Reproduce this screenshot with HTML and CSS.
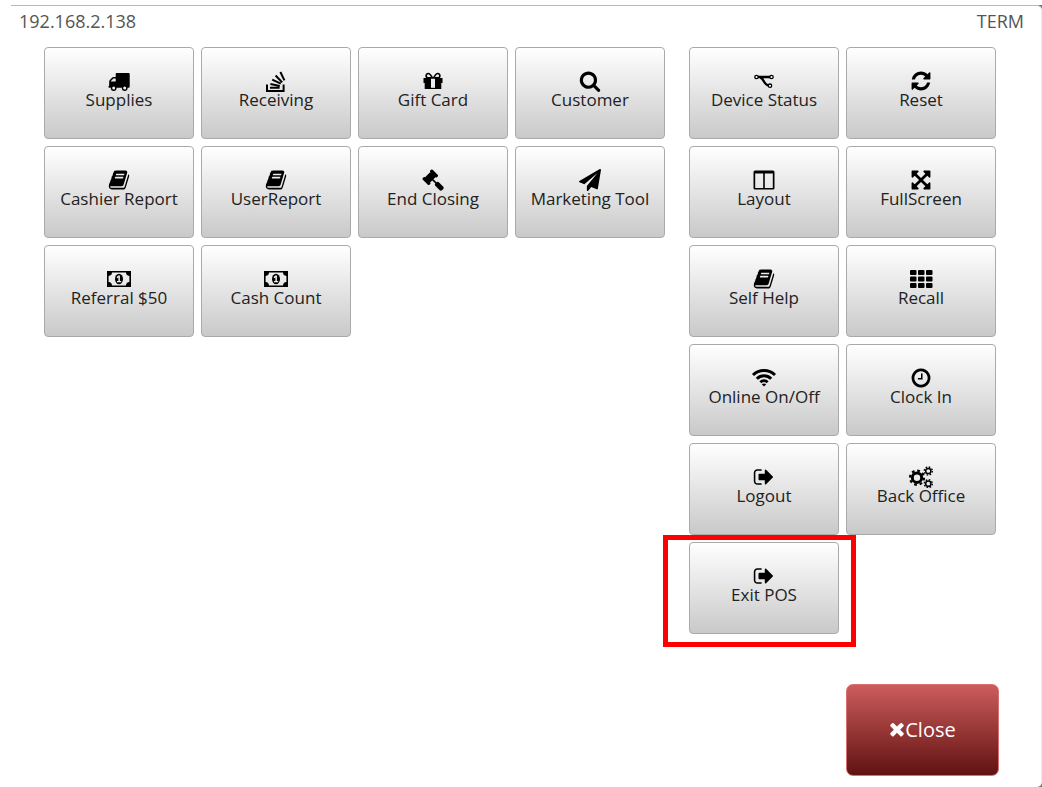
FILE: index.html
```
<!DOCTYPE html>
<html lang="en">
<head>
<meta charset="utf-8">
<title>POS Menu</title>

<link rel="stylesheet" href="styles.css">

</head>

<body>

<!-- shared icons -->
<svg class="defs" aria-hidden="true">
    <symbol id="book" viewBox="-163 0 2118 1792">
        <path d="M1703 478q40 57 18 129l-275 906q-19 64-76.5 107.5t-122.5 43.5h-923q-77 0-148.5-53.5t-99.5-131.5q-24-67-2-127 0-4 3-27t4-37q1-8-3-21.5t-3-19.5q2-11 8-21t16.5-23.5 16.5-23.5q23-38 45-91.5t30-91.5q3-10 .5-30t-.5-28q3-11 17-28t17-23q21-36 42-92t25-90q1-9-2.5-32t.5-28q4-13 22-30.5t22-22.5q19-26 42.5-84.5t27.5-96.5q1-8-3-25.5t-2-26.5q2-8 9-18t18-23 17-21q8-12 16.5-30.5t15-35 16-36 19.5-32 26.5-23.5 36-11.5 47.5 5.5l-1 3q38-9 51-9h761q74 0 114 56t18 130l-274 906q-36 119-71.5 153.5t-128.5 34.5h-869q-27 0-38 15-11 16-1 43 24 70 144 70h923q29 0 56-15.5t35-41.5l300-987q7-22 5-57 38 15 59 43zm-1064 2q-4 13 2 22.5t20 9.5h608q13 0 25.5-9.5t16.5-22.5l21-64q4-13-2-22.5t-20-9.5h-608q-13 0-25.5 9.5t-16.5 22.5zm-83 256q-4 13 2 22.5t20 9.5h608q13 0 25.5-9.5t16.5-22.5l21-64q4-13-2-22.5t-20-9.5h-608q-13 0-25.5 9.5t-16.5 22.5z"/>
    </symbol>
    <symbol id="money" viewBox="0 0 26 22">
        <path fill-rule="evenodd" d="M1 3h24v16H1zM6 4.6a3.6 3.6 0 0 1-3.4 3.4v6a3.6 3.6 0 0 1 3.4 3.4h14a3.6 3.6 0 0 1 3.4-3.4V8A3.6 3.6 0 0 1 20 4.6z"/>
        <ellipse cx="13" cy="11" rx="4" ry="5.2"/>
        <path fill="#eee" d="M12.3 7.5h1.6v5.4h1.3v1.3h-4.2v-1.3h1.4V9.6l-1.1.6-.7-1z"/>
    </symbol>
    <symbol id="signout" viewBox="-163 0 2118 1792">
        <path d="M704 1440q0 4 1 20t.5 26.5-3 23.5-10 19.5-20.5 6.5h-320q-119 0-203.5-84.5t-84.5-203.5v-704q0-119 84.5-203.5t203.5-84.5h320q13 0 22.5 9.5t9.5 22.5q0 4 1 20t.5 26.5-3 23.5-10 19.5-20.5 6.5h-320q-66 0-113 47t-47 113v704q0 66 47 113t113 47h312l11.5 1 11.5 3 8 5.5 7 9 2 13.5zm928-544q0 26-19 45l-544 544q-19 19-45 19t-45-19-19-45v-288h-448q-26 0-45-19t-19-45v-384q0-26 19-45t45-19h448v-288q0-26 19-45t45-19 45 19l544 544q19 19 19 45z"/>
    </symbol>
</svg>

<div class="screen">
<div class="panel">

<header>
    <span>192.168.2.138</span>
    <span>TERM</span>
</header>

<main>
<div class="menu menu-left">
    <button class="tile">
        <svg viewBox="0 0 26 22"><path fill-rule="evenodd" d="M10.5 3h12.2q1 0 1 1v12.5q0 1.2-1.2 1.2H3.6q-1.2 0-1.2-1.2.8-.4.8-1.4V11.5q0-.9.6-1.5L6.2 7.6q.6-.6 1.5-.6h2V4q0-1 .8-1zM4.8 11.5h4.9V8.6h-2q-.3 0-.5.2l-2.2 2.2q-.2.2-.2.5z"/><circle cx="7.7" cy="18" r="2.2" fill="#eee" stroke="#000" stroke-width="1.4"/><circle cx="18.7" cy="18" r="2.2" fill="#eee" stroke="#000" stroke-width="1.4"/></svg>
        <span>Supplies</span>
    </button>
    <button class="tile">
        <svg viewBox="0 0 26 22"><path class="line" stroke-width="2" d="M4 14.5v6.5h16.6v-6.5M7 17.7h9.6M7.4 14l9.4 2M9.2 9.7l8.6 4M12.6 5.5l6.6 6.9M17.4 2l4 8.4"/></svg>
        <span>Receiving</span>
    </button>
    <button class="tile">
        <svg viewBox="0 0 26 22"><path d="M3.5 8h19v5h-1.2v6h-16.6v-6h-1.2z"/><path fill="#eee" d="M11 8.5h4v9.3h-4z"/><path class="line" stroke-width="1.6" d="M12.4 7.8H8.2c-2.8 0-2.8-4.3 0-4.3 1.8 0 3 2 4.2 4.3zM13.6 7.8h4.2c2.8 0 2.8-4.3 0-4.3-1.8 0-3 2-4.2 4.3z"/></svg>
        <span>Gift Card</span>
    </button>
    <button class="tile">
        <svg viewBox="-163 0 2118 1792"><path d="M1216 832q0-185-131.5-316.5t-316.5-131.5-316.5 131.5-131.5 316.5 131.5 316.5 316.5 131.5 316.5-131.5 131.5-316.5zm512 832q0 52-38 90t-90 38q-54 0-90-38l-343-342q-179 124-399 124-143 0-273.5-55.5t-225-150-150-225-55.5-273.5 55.5-273.5 150-225 225-150 273.5-55.5 273.5 55.5 225 150 150 225 55.5 273.5q0 220-124 399l343 343q37 37 37 90z"/></svg>
        <span>Customer</span>
    </button>
    <button class="tile">
        <svg><use href="#book"/></svg>
        <span>Cashier Report</span>
    </button>
    <button class="tile">
        <svg><use href="#book"/></svg>
        <span>UserReport</span>
    </button>
    <button class="tile">
        <svg viewBox="-163 0 2118 1792"><path d="M1771 1536q0 53-37 90l-107 108q-39 37-91 37-53 0-90-37l-363-364q-38-36-38-90 0-53 43-96l-256-256-126 126q-14 14-34 14t-34-14q2 2 12.5 12t12.5 13 10 11.5 10 13.5 6 13.5 5.5 16.5 1.5 18q0 38-28 68-3 3-16.5 18t-19 20.5-18.5 16.5-22 15.5-22 9-26 4.5q-40 0-68-28l-408-408q-28-28-28-68 0-13 4.5-26t9-22 15.5-22 16.5-18.5 20.5-19 18-16.5q30-28 68-28 10 0 18 1.5t16.5 5.5 13.5 6 13.5 10 11.5 10 13 12.5 12 12.5q-14-14-14-34t14-34l348-348q14-14 34-14t34 14q-2-2-12.5-12t-12.5-13-10-11.5-10-13.5-6-13.5-5.5-16.5-1.5-18q0-38 28-68 3-3 16.5-18t19-20.5 18.5-16.5 22-15.5 22-9 26-4.5q40 0 68 28l408 408q28 28 28 68 0 13-4.5 26t-9 22-15.5 22-16.5 18.5-20.5 19-18 16.5q-30 28-68 28-10 0-18-1.5t-16.5-5.5-13.5-6-13.5-10-11.5-10-13-12.5-12-12.5q14 14 14 34t-14 34l-126 126 256 256q43-43 96-43 52 0 91 37l363 363q37 39 37 91z"/></svg>
        <span>End Closing</span>
    </button>
    <button class="tile">
        <svg viewBox="-163 0 2118 1792"><path d="M1764 11q33 24 27 64l-256 1536q-5 29-32 45-14 8-31 8-11 0-24-5l-453-185-242 295q-18 23-49 23-13 0-22-4-19-7-30.5-23.5t-11.5-36.5v-349l864-1059-1069 925-395-162q-37-14-40-55-2-40 32-59l1664-960q15-9 32-9 20 0 36 11z"/></svg>
        <span>Marketing Tool</span>
    </button>
    <button class="tile">
        <svg><use href="#money"/></svg>
        <span>Referral $50</span>
    </button>
    <button class="tile">
        <svg><use href="#money"/></svg>
        <span>Cash Count</span>
    </button>
</div>

<div class="menu menu-right">
    <button class="tile">
        <svg viewBox="0 0 26 22"><path class="line" stroke-width="2.4" d="M7 7h12M9 7.5c4 0 3 7.5 9 8"/><g fill="#fff" stroke="#000" stroke-width="1.3"><circle cx="5.5" cy="7" r="1.7"/><circle cx="20.5" cy="7" r="1.7"/><circle cx="19" cy="15.7" r="1.7"/></g></svg>
        <span>Device Status</span>
    </button>
    <button class="tile">
        <svg viewBox="-163 0 2118 1792"><path d="M1639 1056q0 5-1 7-64 268-268 434.5t-478 166.5q-146 0-282.5-55t-243.5-157l-129 129q-19 19-45 19t-45-19-19-45v-448q0-26 19-45t45-19h448q26 0 45 19t19 45-19 45l-137 137q71 66 161 102t187 36q134 0 250-65t186-179q11-17 53-117 8-23 30-23h192q13 0 22.5 9.5t9.5 22.5zm25-800v448q0 26-19 45t-45 19h-448q-26 0-45-19t-19-45 19-45l138-138q-148-137-349-137-134 0-250 65t-186 179q-11 17-53 117-8 23-30 23h-199q-13 0-22.5-9.5t-9.5-22.5v-7q65-268 270-434.5t480-166.5q146 0 284 55.5t245 156.5l130-129q19-19 45-19t45 19 19 45z"/></svg>
        <span>Reset</span>
    </button>
    <button class="tile">
        <svg viewBox="0 0 26 22"><path fill-rule="evenodd" d="M4 1.5h18q1.5 0 1.5 1.5v16q0 1.5-1.5 1.5H4q-1.5 0-1.5-1.5V3q0-1.5 1.5-1.5zM4.2 4.5V19h8V4.5zM13.8 4.5V19h8V4.5z"/></svg>
        <span>Layout</span>
    </button>
    <button class="tile">
        <svg viewBox="-163 0 2118 1792"><path d="M1411 541l-355 355 355 355 144-144q29-31 70-14 39 17 39 59v448q0 26-19 45t-45 19h-448q-42 0-59-40-17-39 14-69l144-144-355-355-355 355 144 144q31 30 14 69-17 40-59 40h-448q-26 0-45-19t-19-45v-448q0-42 40-59 39-17 69 14l144 144 355-355-355-355-144 144q-19 19-45 19-12 0-24-5-40-17-40-59v-448q0-26 19-45t45-19h448q42 0 59 40 17 39-14 69l-144 144 355 355 355-355-144-144q-31-30-14-69 17-40 59-40h448q26 0 45 19t19 45v448q0 42-39 59-13 5-25 5-26 0-45-19z"/></svg>
        <span>FullScreen</span>
    </button>
    <button class="tile">
        <svg><use href="#book"/></svg>
        <span>Self Help</span>
    </button>
    <button class="tile">
        <svg viewBox="0 0 26 22"><rect x="2" y="2" width="6.5" height="5" rx="1"/><rect x="10" y="2" width="6.5" height="5" rx="1"/><rect x="18" y="2" width="6.5" height="5" rx="1"/><rect x="2" y="8.5" width="6.5" height="5" rx="1"/><rect x="10" y="8.5" width="6.5" height="5" rx="1"/><rect x="18" y="8.5" width="6.5" height="5" rx="1"/><rect x="2" y="15" width="6.5" height="5" rx="1"/><rect x="10" y="15" width="6.5" height="5" rx="1"/><rect x="18" y="15" width="6.5" height="5" rx="1"/></svg>
        <span>Recall</span>
    </button>
    <button class="tile">
        <svg viewBox="0 0 26 22"><path class="line" stroke-width="3" d="M2 8a15.6 15.6 0 0 1 22 0M5.8 11.7a10.2 10.2 0 0 1 14.4 0M9.4 15.2a5.1 5.1 0 0 1 7.2 0"/><path d="M10.8 17.2q2.2-1.6 4.4 0L13 19.4z"/></svg>
        <span>Online On/Off</span>
    </button>
    <button class="tile">
        <svg viewBox="-163 0 2118 1792"><path d="M1024 544v448q0 14-9 23t-23 9h-320q-14 0-23-9t-9-23v-64q0-14 9-23t23-9h224v-352q0-14 9-23t23-9h64q14 0 23 9t9 23zm416 352q0-148-73-273t-198-198-273-73-273 73-198 198-73 273 73 273 198 198 273 73 273-73 198-198 73-273zm224 0q0 209-103 385.5t-279.5 279.5-385.5 103-385.5-103-279.5-279.5-103-385.5 103-385.5 279.5-279.5 385.5-103 385.5 103 279.5 279.5 103 385.5z"/></svg>
        <span>Clock In</span>
    </button>
    <button class="tile">
        <svg><use href="#signout"/></svg>
        <span>Logout</span>
    </button>
    <button class="tile">
        <svg viewBox="0 0 26 22"><g class="line"><circle cx="9" cy="11.7" r="4.7" stroke-width="3"/><circle cx="9" cy="11.7" r="7" stroke-width="2.2" stroke-dasharray="2.75"/><circle cx="20.3" cy="5" r="2.6" stroke-width="1.5"/><circle cx="20.3" cy="5" r="4" stroke-width="1.4" stroke-dasharray="1.57"/><circle cx="20.3" cy="17.7" r="2.6" stroke-width="1.5"/><circle cx="20.3" cy="17.7" r="4" stroke-width="1.4" stroke-dasharray="1.57"/></g></svg>
        <span>Back Office</span>
    </button>
    <div class="highlight">
        <button class="tile">
            <svg><use href="#signout"/></svg>
            <span>Exit POS</span>
        </button>
    </div>
</div>
</main>

<footer>
    <button class="close">
        <svg viewBox="256 200 1280 1400"><path d="M1490 1322q0 40-28 68l-136 136q-28 28-68 28t-68-28l-294-294-294 294q-28 28-68 28t-68-28l-136-136q-28-28-28-68t28-68l294-294-294-294q-28-28-28-68t28-68l136-136q28-28 68-28t68 28l294 294 294-294q28-28 68-28t68 28l136 136q28 28 28 68t-28 68l-294 294 294 294q28 28 28 68z"/></svg>
        <span>Close</span>
    </button>
</footer>

</div>
</div>

</body>
</html>
```
FILE: styles.css
```
* {
    box-sizing: border-box;
}

body {
    margin: 0;
    padding: 5px 0 0 11px;
    background: white;
    font-family: "Open Sans", "Noto Sans", sans-serif;
}

.defs {
    display: none;
}

.screen {
    background: #777;
}

.panel {
    min-height: calc(100vh - 5px);
    background: white;
    border-top: 1px solid #bbb;
    border-right: 1px solid #eee;
    border-radius: 0 5px 5px 0;
}

header {
    display: flex;
    justify-content: space-between;
    padding: 3px 17px 0 8px;
    font-size: 18px;
    line-height: 24px;
    color: #555;
}

main {
    display: flex;
    justify-content: space-between;
    align-items: flex-start;
    padding: 14px 45px 0 33px;
}

.menu {
    display: grid;
    gap: 7px;
}

.menu-left {
    grid-template-columns: repeat(4, 150px);
}

.menu-right {
    grid-template-columns: repeat(2, 150px);
}

button {
    font-family: inherit;
    cursor: pointer;
}

.tile {
    display: flex;
    flex-direction: column;
    align-items: center;
    justify-content: center;
    width: 150px;
    height: 92px;
    padding: 0 0 8px;
    background: linear-gradient(#fff, #c9c9c9);
    border: 1px solid #aaa;
    border-radius: 4px;
    font-size: 17px;
    line-height: 16px;
    color: #222;
}

.tile:hover {
    background: linear-gradient(#fff, #bbb);
}

.tile svg {
    width: 26px;
    height: 22px;
    fill: black;
}

.tile .line {
    fill: none;
    stroke: black;
}

.highlight {
    position: relative;
}

/* red frame round the exit button */
.highlight::after {
    content: "";
    position: absolute;
    top: -7px;
    left: -26px;
    box-sizing: border-box;
    width: 193px;
    height: 112px;
    border: 5px solid red;
    pointer-events: none;
}

footer {
    display: flex;
    justify-content: flex-end;
    padding: 50px 42px 0 0;
}

.close {
    display: flex;
    align-items: center;
    justify-content: center;
    width: 153px;
    height: 92px;
    padding: 0 0 2px;
    background: linear-gradient(#cd5c5c, #611212);
    border: 1px solid #d87070;
    border-radius: 7px;
    font-size: 20px;
    color: white;
}

.close svg {
    width: 16px;
    height: 16px;
    fill: white;
}
```
